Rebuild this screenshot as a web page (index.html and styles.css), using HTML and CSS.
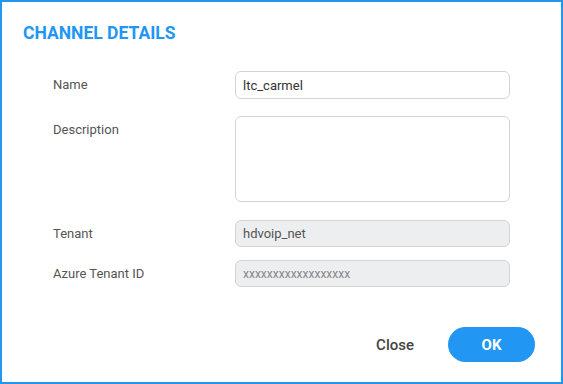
FILE: index.html
```html
<!DOCTYPE html>
<html lang="en">
<head>
    <meta charset="UTF-8">
    <title>Channel Details</title>
    <link rel="stylesheet" href="styles.css">
</head>
<body>
<div class="dialog">
    <h2 class="dialog-title">CHANNEL DETAILS</h2>
    <div class="form">
        <div class="row row-name">
            <label class="label">Name</label>
            <input class="field" type="text" value="ltc_carmel">
        </div>
        <div class="row row-desc">
            <label class="label">Description</label>
            <textarea class="field area"></textarea>
        </div>
        <div class="row row-tenant">
            <label class="label">Tenant</label>
            <input class="field" type="text" value="hdvoip_net" disabled>
        </div>
        <div class="row row-azure">
            <label class="label">Azure Tenant ID</label>
            <input class="field small" type="text" placeholder="xxxxxxxxxxxxxxxxxx" disabled>
        </div>
    </div>
    <div class="footer">
        <button class="btn btn-close">Close</button>
        <button class="btn btn-ok">OK</button>
    </div>
</div>
</body>
</html>
```

FILE: styles.css
```css
* {
    margin: 0;
    padding: 0;
    box-sizing: border-box;
}

body {
    font-family: Roboto, "Liberation Sans", sans-serif;
    background: #fff;
}

.dialog {
    width: 563px;
    height: 384px;
    border: 2px solid #2196f3;
    padding: 21px 26px 0 21px;
    background: #fff;
}

.dialog-title {
    font-size: 17.5px;
    line-height: 20px;
    font-weight: 700;
    color: #2196f3;
}

.form {
    margin-top: 28px;
    padding-left: 30px;
    display: flex;
    flex-direction: column;
}

.row {
    display: grid;
    grid-template-columns: 182px 275px;
    align-items: start;
}

.row-desc {
    margin-top: 17px;
}

.row-tenant {
    margin-top: 18px;
}

.row-azure {
    margin-top: 13px;
}

.label {
    padding-top: 6px;
    font-size: 13px;
    line-height: 16px;
    color: #555;
}

.field {
    width: 275px;
    height: 27px;
    border: 1px solid #d4d4d4;
    border-radius: 6px;
    padding: 0 7px;
    font-family: Roboto, "Liberation Sans", sans-serif;
    font-size: 13px;
    color: #333;
    background: #fff;
    outline: none;
}

.row-name .field {
    height: 28px;
}

.field:disabled {
    background: #eceef0;
    color: #555;
}

.field.small {
    font-size: 12px;
}

.field.small::placeholder {
    color: #888;
}

.area {
    height: 86px;
    resize: none;
}

.footer {
    margin-top: 40px;
    display: flex;
    justify-content: flex-end;
    align-items: center;
    gap: 18px;
}

.btn {
    border: 0;
    background: none;
    font-family: Roboto, "Liberation Sans", sans-serif;
    font-size: 15px;
    cursor: pointer;
}

.btn-close {
    padding: 0 16px;
    height: 35px;
    font-weight: 500;
    color: #444;
}

.btn-ok {
    width: 87px;
    height: 35px;
    border-radius: 18px;
    background: #2196f3;
    color: #fff;
    font-weight: 700;
}
```
